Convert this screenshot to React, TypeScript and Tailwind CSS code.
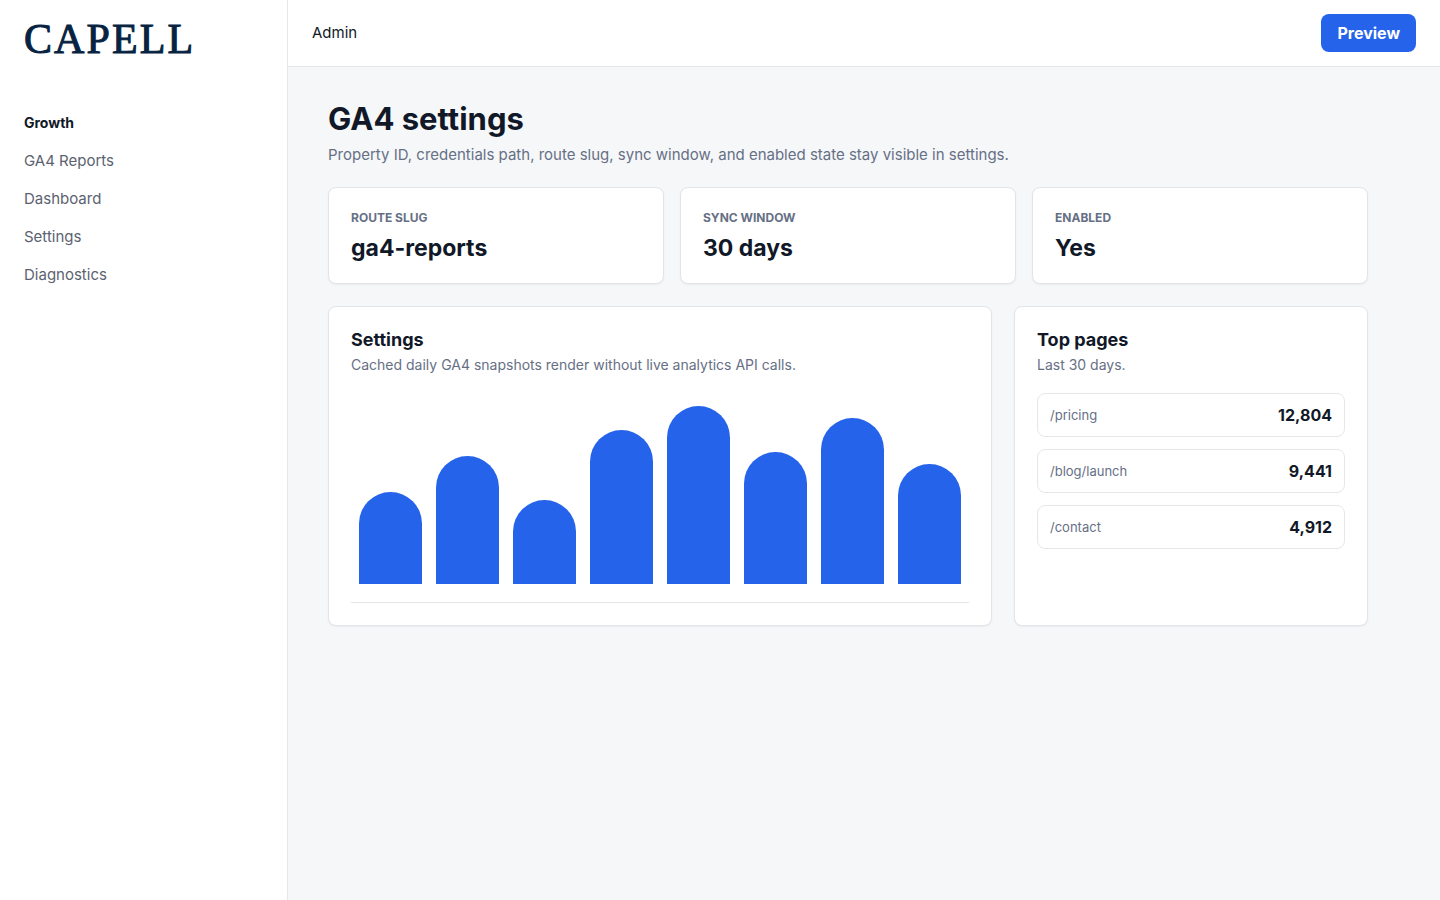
const navItems = ["GA4 Reports", "Dashboard", "Settings", "Diagnostics"];

const stats = [
  { label: "Route slug", value: "ga4-reports" },
  { label: "Sync window", value: "30 days" },
  { label: "Enabled", value: "Yes" },
];

const bars = [92, 128, 84, 154, 178, 132, 166, 120];

const pages = [
  { path: "/pricing", views: "12,804" },
  { path: "/blog/launch", views: "9,441" },
  { path: "/contact", views: "4,912" },
];

export default function App() {
  return (
    <div className="flex min-h-screen bg-[#f6f7f9] font-['Inter','Liberation_Sans',sans-serif] text-base leading-6 text-[#111827]">
      <aside className="w-72 shrink-0 border-r border-[#e5e7eb] bg-white px-6 pt-4">
        <div className="font-['Liberation_Serif',serif] text-[42px] leading-[46px] tracking-wider text-[#062342] [-webkit-text-stroke:1px_#062342]">CAPELL</div>
        <nav className="mt-[42px] flex flex-col text-[15px] leading-[38px] text-[#5b6270]">
          <a href="#growth" className="text-sm leading-[38px] font-bold text-[#111827]">Growth</a>
          {navItems.map((item) => (
            <a key={item} href="#">{item}</a>
          ))}
        </nav>
      </aside>
      <div className="min-w-0 flex-1">
        <header className="flex h-[67px] items-center justify-between border-b border-[#e5e7eb] bg-white px-6">
          <span className="text-[15px]">Admin</span>
          <button type="button" className="rounded-lg bg-[#2563eb] px-4 py-[7px] font-bold text-white">Preview</button>
        </header>
        <main className="pt-8 pr-[72px] pl-10">
          <h1 className="text-[31px] leading-10 font-bold">GA4 settings</h1>
          <p className="mt-1 text-[15px] leading-6 text-[#667085]">Property ID, credentials path, route slug, sync window, and enabled state stay visible in settings.</p>
          <div className="mt-5 grid grid-cols-3 gap-4">
            {stats.map((s) => (
              <section key={s.label} className="rounded-lg border border-[#e1e5ea] bg-white px-[22px] py-5 shadow-xs">
                <div className="text-xs leading-5 font-bold text-[#667085] uppercase">{s.label}</div>
                <div className="mt-[5px] text-[23px] leading-[30px] font-bold">{s.value}</div>
              </section>
            ))}
          </div>
          <div className="mt-[22px] grid grid-cols-[1fr_354px] gap-[22px]">
            <section className="rounded-lg border border-[#e1e5ea] bg-white p-[22px] shadow-xs">
              <h2 className="text-lg leading-[22px] font-bold">Settings</h2>
              <p className="mt-1 text-sm leading-5 text-[#667085]">Cached daily GA4 snapshots render without live analytics API calls.</p>
              <div className="mt-5 flex h-[208px] items-end gap-[14px] border-b border-[#e5e7eb] px-2 pb-[18px]">
                {bars.map((h, i) => (
                  <div key={i} className="flex-1 rounded-t-full bg-[#2563eb]" style={{ height: h }} />
                ))}
              </div>
            </section>
            <section className="rounded-lg border border-[#e1e5ea] bg-white p-[22px] shadow-xs">
              <h2 className="text-lg leading-[22px] font-bold">Top pages</h2>
              <p className="mt-1 text-sm leading-5 text-[#667085]">Last 30 days.</p>
              <ul className="mt-[18px] flex flex-col gap-3">
                {pages.map((p) => (
                  <li key={p.path} className="flex h-11 items-center justify-between rounded-lg border border-[#e5e7eb] px-3">
                    <span className="text-[13px] text-[#667085]">{p.path}</span>
                    <strong>{p.views}</strong>
                  </li>
                ))}
              </ul>
            </section>
          </div>
        </main>
      </div>
    </div>
  );
}
